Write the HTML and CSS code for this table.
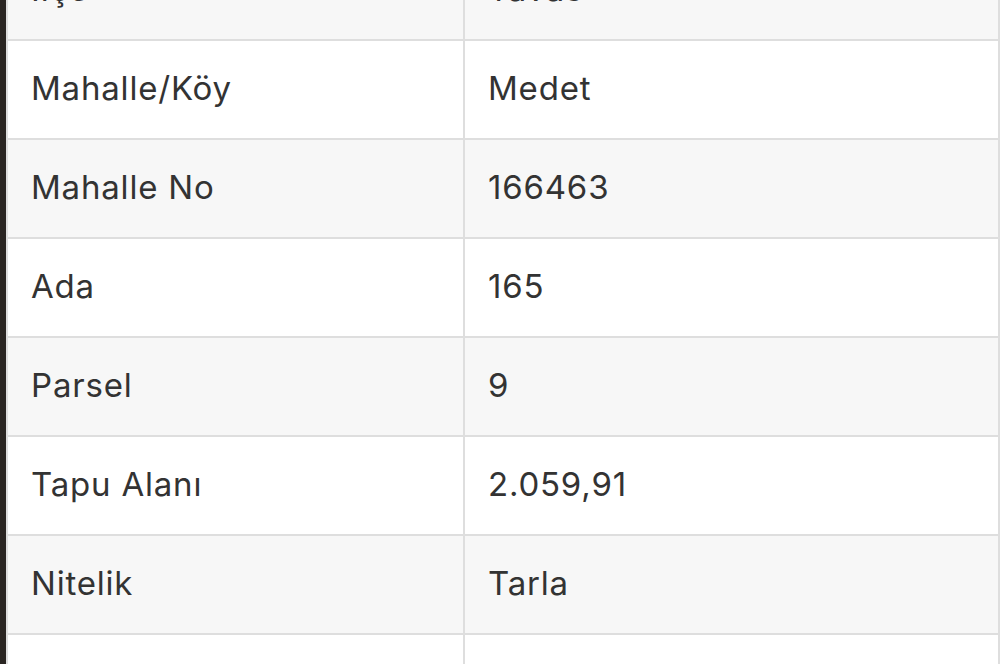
FILE: index.html
```html
<!DOCTYPE html>
<html lang="tr">
<head>
<meta charset="utf-8">
<link rel="stylesheet" href="styles.css">
</head>
<body>
<div class="page">
  <table class="info">
    <tbody>
      <tr><td class="key">İlçe</td><td class="val">Tavas</td></tr>
      <tr><td class="key">Mahalle/Köy</td><td class="val">Medet</td></tr>
      <tr><td class="key">Mahalle No</td><td class="val">166463</td></tr>
      <tr><td class="key">Ada</td><td class="val">165</td></tr>
      <tr><td class="key">Parsel</td><td class="val">9</td></tr>
      <tr><td class="key">Tapu Alanı</td><td class="val">2.059,91</td></tr>
      <tr><td class="key">Nitelik</td><td class="val">Tarla</td></tr>
      <tr><td class="key">Mevkii</td><td class="val">Medet</td></tr>
    </tbody>
  </table>
</div>
</body>
</html>
```
FILE: styles.css
```css
html, body {
  margin: 0;
  padding: 0;
  width: 1000px;
  height: 664px;
  overflow: hidden;
  background: #2a2522;
}
.page {
  padding-left: 6px;
}
.info {
  margin-top: -59px;
  width: 994px;
  border-collapse: collapse;
  font-family: Inter, "Open Sans", sans-serif;
  font-size: 33px;
  letter-spacing: 0.8px;
  color: #333333;
  background: #ffffff;
  border-left: 2px solid #dedede;
  border-right: 2px solid #dedede;
}
.info tr:nth-child(odd) {
  background: #f7f7f7;
}
.info tr:nth-child(even) {
  background: #ffffff;
}
.info td {
  height: 99px;
  padding: 0 0 3px 23px;
  border-bottom: 2px solid #dedede;
  vertical-align: middle;
  box-sizing: border-box;
}
.info td.key {
  width: 457px;
  border-right: 2px solid #dedede;
}
```
